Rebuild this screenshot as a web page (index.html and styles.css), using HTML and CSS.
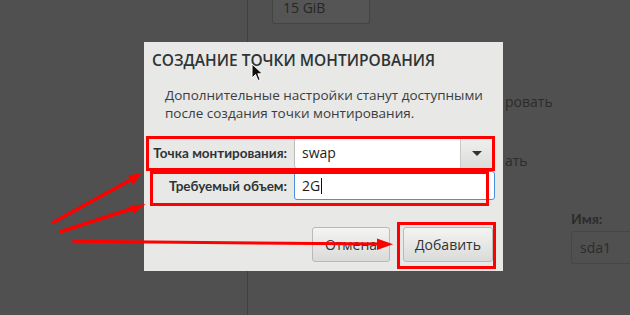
FILE: index.html
```html
<!DOCTYPE html>
<html lang="ru">
<head>
<meta charset="utf-8">
<title>Создание точки монтирования</title>
<link rel="stylesheet" href="styles.css">
</head>
<body>
<div class="backdrop">
  <div class="sidebar"></div>
  <div class="pane">
    <div class="size-box">15 GiB</div>
    <div class="faded reformat">ровать</div>
    <div class="faded encrypt">ать</div>
    <div class="name-group">
      <div class="name-label">Имя:</div>
      <div class="name-input">sda1</div>
    </div>
  </div>
</div>

<div class="dialog">
  <h1 class="dialog-title">СОЗДАНИЕ ТОЧКИ МОНТИРОВАНИЯ</h1>
  <p class="dialog-desc">Дополнительные настройки станут доступными<br>после создания точки монтирования.</p>
  <div class="form">
    <label class="form-label">Точка монтирования:</label>
    <div class="combo">
      <span class="combo-value">swap</span>
      <span class="combo-btn"><span class="tri"></span></span>
    </div>
    <label class="form-label">Требуемый объем:</label>
    <div class="entry"><span>2G</span><span class="caret"></span></div>
  </div>
  <div class="actions">
    <button class="btn btn-cancel">Отмена</button>
    <button class="btn btn-add">Добавить</button>
  </div>
</div>

<div class="mark mark-mount"></div>
<div class="mark mark-size"></div>
<div class="mark mark-add"></div>

<svg class="arrows" width="630" height="315" viewBox="0 0 630 315">
  <g fill="#ff0000" stroke="#ff0000" stroke-width="3.5" stroke-linecap="round">
    <line x1="53" y1="222.5" x2="134" y2="178"/>
    <polygon stroke="none" points="142,173 128,175.5 133,185"/>
    <line x1="61" y1="231.5" x2="137" y2="207"/>
    <polygon stroke="none" points="145.5,204 130,206 134,214"/>
    <line x1="73.5" y1="241.3" x2="382" y2="244" stroke-width="3"/>
    <polygon stroke="none" points="393,244.3 377,238.5 377,250"/>
  </g>
</svg>

<svg class="cursor" width="13" height="20" viewBox="0 0 13 20">
  <path d="M1 1 L1 15 L4.5 11.5 L7 17.5 L9.2 16.6 L6.8 10.8 L11.5 10.8 Z" fill="#111" stroke="#fff" stroke-width="1"/>
</svg>
</body>
</html>
```

FILE: styles.css
```css
html, body {
  margin: 0;
  padding: 0;
}
body {
  width: 630px;
  height: 315px;
  overflow: hidden;
  background: #505050;
  font-family: "Open Sans", "DejaVu Sans", sans-serif;
  position: relative;
}

/* background window content */
.backdrop {
  display: flex;
  height: 315px;
}
.sidebar {
  width: 247px;
  border-right: 1px solid #414141;
  flex: none;
}
.pane {
  flex: 1;
  padding-left: 24px;
  min-width: 0;
}
.size-box {
  width: 86px;
  height: 23px;
  padding-left: 10px;
  border: 1px solid #444;
  border-top: none;
  border-radius: 0 0 3px 3px;
  background: #555;
  color: #262626;
  font-size: 14px;
  line-height: 16px;
}
.faded {
  color: #2c2c2c;
  font-size: 14px;
  line-height: 18px;
  margin-left: 233px;
}
.reformat {
  margin-top: 69px;
}
.encrypt {
  margin-top: 41px;
}
.name-group {
  margin-top: 41px;
  margin-left: 299px;
}
.name-label {
  font-family: Lato, sans-serif;
  font-weight: bold;
  color: #2c2c2c;
  font-size: 14px;
  line-height: 16px;
}
.name-input {
  margin-top: 4px;
  height: 31px;
  border: 1px solid #464646;
  border-right: none;
  border-radius: 3px 0 0 3px;
  color: #2c2c2c;
  font-size: 14px;
  line-height: 31px;
  padding-left: 8px;
}

/* dialog */
.dialog {
  position: absolute;
  left: 144px;
  top: 42px;
  width: 359px;
  height: 229px;
  background: #e8e8e7;
  box-sizing: border-box;
  padding: 8px 8px 0 8px;
}
.dialog-title {
  margin: 0;
  font-family: "Open Sans", sans-serif;
  font-weight: 600;
  font-size: 15.5px;
  line-height: 20px;
  color: #2e3436;
}
.dialog-desc {
  margin: 16px 0 0 13px;
  font-size: 13.5px;
  line-height: 18px;
  color: #3a3d3e;
}
.form {
  display: grid;
  grid-template-columns: 135px auto;
  column-gap: 7px;
  row-gap: 2px;
  margin-top: 15px;
  align-items: center;
}
.form-label {
  justify-self: end;
  white-space: nowrap;
  font-family: Lato, "Open Sans", sans-serif;
  font-weight: bold;
  font-size: 13.5px;
  color: #2e3436;
}
.combo {
  width: 199px;
  height: 32px;
  box-sizing: border-box;
  display: flex;
  border: 1px solid #bdbdb9;
  border-radius: 3px;
  background: #fff;
  overflow: hidden;
}
.combo-value {
  flex: 1;
  padding-left: 7px;
  font-size: 14px;
  line-height: 30px;
  color: #1e1e1e;
}
.combo-btn {
  width: 31px;
  border-left: 1px solid #c9c9c6;
  background: linear-gradient(#f0f0ef, #dcdcda);
  display: flex;
  align-items: center;
  justify-content: center;
}
.tri {
  width: 0;
  height: 0;
  border-left: 5px solid transparent;
  border-right: 5px solid transparent;
  border-top: 5px solid #2e3436;
}
.entry {
  width: 201px;
  height: 29px;
  box-sizing: border-box;
  border: 1px solid #4a90d9;
  border-radius: 3px;
  background: #fff;
  padding-left: 7px;
  font-size: 14px;
  color: #1e1e1e;
  display: flex;
  align-items: center;
}
.caret {
  width: 1px;
  height: 16px;
  background: #111;
  margin-left: 1px;
}
.actions {
  display: flex;
  justify-content: flex-end;
  gap: 13px;
  margin-top: 27px;
  padding-right: 2px;
}
.btn {
  height: 35px;
  border: 1px solid #b9b9b5;
  border-radius: 3px;
  background: linear-gradient(#f4f4f3, #dadad8);
  font-family: "Open Sans", sans-serif;
  font-size: 14px;
  color: #2e3436;
  padding: 0;
}
.btn-cancel { width: 78px; }
.btn-add { width: 90px; }

/* red annotation boxes */
.mark {
  position: absolute;
  border: 3px solid #ff0000;
  box-sizing: border-box;
}
.mark-mount {
  left: 146px;
  top: 136px;
  width: 349px;
  height: 35px;
}
.mark-size {
  left: 150px;
  top: 171px;
  width: 339px;
  height: 35px;
}
.mark-add {
  left: 397px;
  top: 222px;
  width: 99px;
  height: 47px;
}
.arrows {
  position: absolute;
  left: 0;
  top: 0;
}
.cursor {
  position: absolute;
  left: 251px;
  top: 63px;
}
```
